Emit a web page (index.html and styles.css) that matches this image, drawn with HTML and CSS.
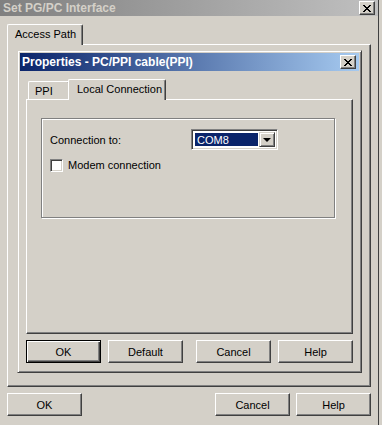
FILE: index.html
```html
<!DOCTYPE html>
<html lang="en">
<head>
    <meta charset="UTF-8">
    <meta name="viewport" content="width=device-width, initial-scale=1.0">
    <title>Set PG/PC Interface</title>
    <link rel="stylesheet" href="styles.css">
</head>
<body>

    <div class="window">
        <div class="titlebar inactive">
            <span>Set PG/PC Interface</span>
            <span class="close-btn">
                <svg width="8" height="7" viewBox="0 0 8 7"><path d="M0 0h2v1H0z M6 0h2v1H6z M1 1h2v1H1z M5 1h2v1H5z M2 2h4v1H2z M3 3h2v1H3z M2 4h4v1H2z M1 5h2v1H1z M5 5h2v1H5z M0 6h2v1H0z M6 6h2v1H6z" fill="#000"/></svg>
            </span>
        </div>

        <div class="window-body">
            <div class="tabs outer-tabs">
                <div class="tab active tab-access">Access Path</div>
            </div>

            <div class="tab-page outer-page">
                <div class="dialog">
                    <div class="titlebar active">
                        <span>Properties - PC/PPI cable(PPI)</span>
                        <span class="close-btn">
                            <svg width="8" height="7" viewBox="0 0 8 7"><path d="M0 0h2v1H0z M6 0h2v1H6z M1 1h2v1H1z M5 1h2v1H5z M2 2h4v1H2z M3 3h2v1H3z M2 4h4v1H2z M1 5h2v1H1z M5 5h2v1H5z M0 6h2v1H0z M6 6h2v1H6z" fill="#000"/></svg>
                        </span>
                    </div>

                    <div class="dialog-body">
                        <div class="tabs inner-tabs">
                            <div class="tab tab-ppi">PPI</div>
                            <div class="tab active tab-local">Local Connection</div>
                        </div>

                        <div class="tab-page inner-page">
                            <div class="group">
                                <div class="field-row">
                                    <span class="field-label">Connection to:</span>
                                    <div class="combo">
                                        <span class="combo-value">COM8</span>
                                        <span class="combo-btn"><span class="arrow"></span></span>
                                    </div>
                                </div>
                                <div class="check-row">
                                    <span class="checkbox"></span>
                                    <span>Modem connection</span>
                                </div>
                            </div>
                        </div>

                        <div class="buttons">
                            <button class="btn btn-default">OK</button>
                            <button class="btn">Default</button>
                            <button class="btn push-right">Cancel</button>
                            <button class="btn">Help</button>
                        </div>
                    </div>
                </div>
            </div>

            <div class="buttons outer-buttons">
                <button class="btn">OK</button>
                <button class="btn push-right">Cancel</button>
                <button class="btn">Help</button>
            </div>
        </div>
    </div>

</body>
</html>
```

FILE: styles.css
```css
* {
    box-sizing: border-box;
}
body {
    margin: 0;
    background-color: #d4d0c8;
    font-family: "Liberation Sans", Arial, sans-serif;
    font-size: 11px;
    line-height: 13px;
    color: #000;
}
.window {
    width: 379px;
    height: 425px;
    background: #d4d0c8;
    border-right: 1px solid #404040;
}

/* title bars */
.titlebar {
    display: flex;
    align-items: center;
    justify-content: space-between;
    height: 16px;
    padding: 0 3px 0 3px;
    font-size: 12px;
    font-weight: bold;
    white-space: nowrap;
}
.titlebar.inactive {
    background: linear-gradient(to right, #808080, #c0c0c0);
    color: #d4d0c8;
}
.titlebar.active {
    height: 18px;
    padding-left: 2px;
    background: linear-gradient(to right, #0a246a, #a6caf0);
    color: #fff;
}
.close-btn {
    display: flex;
    align-items: center;
    justify-content: center;
    width: 16px;
    height: 14px;
    background: #d4d0c8;
    border: 1px solid;
    border-color: #fff #404040 #404040 #fff;
    box-shadow: inset -1px -1px #808080;
}

.window-body {
    padding: 9px 0 0 7px;
}

/* tabs */
.tabs {
    display: flex;
    align-items: flex-end;
}
.outer-tabs {
    height: 19px;
}
.inner-tabs {
    height: 20px;
}
.tab {
    height: 18px;
    padding: 3px 6px 0 6px;
    white-space: nowrap;
    background: #d4d0c8;
    border: 1px solid;
    border-bottom: none;
    border-color: #fff #404040 #fff #fff;
    box-shadow: inset -1px 0 #808080;
    border-radius: 2px 2px 0 0;
}
.tab.active {
    position: relative;
    z-index: 1;
    height: 21px;
    margin-bottom: -1px;
}
.tab-access {
    width: 76px;
    height: 20px;
    padding-left: 7px;
}
.tab-ppi {
    width: 42px;
    margin-left: 2px;
}
.tab-local {
    width: 98px;
    margin-left: -2px;
    padding-left: 8px;
}

.tab-page {
    background: #d4d0c8;
    border: 1px solid;
    border-color: #fff #404040 #404040 #fff;
    box-shadow: inset -1px -1px #808080;
}
.outer-page {
    width: 364px;
    height: 343px;
    padding: 5px 0 0 9px;
}
.inner-page {
    height: 235px;
    padding: 18px 0 0 14px;
}

/* dialog */
.dialog {
    width: 345px;
    height: 323px;
    padding: 2px;
    border: 1px solid;
    border-color: #d4d0c8 #404040 #404040 #d4d0c8;
    box-shadow: inset 1px 1px #fff, inset -1px -1px #808080;
}
.dialog-body {
    padding: 8px 6px 0 6px;
}

/* group box */
.group {
    width: 294px;
    height: 100px;
    padding: 10px 0 0 8px;
    border: 1px solid #808080;
    box-shadow: inset 1px 1px #fff, 1px 1px #fff;
}
.field-row {
    display: flex;
    align-items: center;
}
.field-label {
    width: 141px;
    padding-top: 2px;
}
.combo {
    display: flex;
    width: 87px;
    height: 21px;
    padding: 2px;
    background: #fff;
    border: 1px solid;
    border-color: #808080 #fff #fff #808080;
    box-shadow: inset 1px 1px #404040, inset -1px -1px #d4d0c8;
}
.combo-value {
    flex: 1;
    margin: 1px;
    padding: 1px 0 0 2px;
    background: #0a246a;
    color: #fff;
}
.combo-btn {
    display: flex;
    align-items: center;
    justify-content: center;
    width: 16px;
    background: #d4d0c8;
    border: 1px solid;
    border-color: #d4d0c8 #404040 #404040 #d4d0c8;
    box-shadow: inset 1px 1px #fff, inset -1px -1px #808080;
}
.arrow {
    width: 0;
    height: 0;
    border-left: 4px solid transparent;
    border-right: 4px solid transparent;
    border-top: 4px solid #000;
    margin-top: 1px;
}
.check-row {
    display: flex;
    align-items: center;
    margin-top: 9px;
}
.checkbox {
    width: 13px;
    height: 13px;
    margin-right: 5px;
    background: #fff;
    border: 1px solid;
    border-color: #808080 #fff #fff #808080;
    box-shadow: inset 1px 1px #404040, inset -1px -1px #d4d0c8;
}

/* buttons */
.buttons {
    display: flex;
    gap: 7px;
    margin-top: 6px;
}
.outer-buttons {
    width: 364px;
    gap: 6px;
}
.push-right {
    margin-left: auto;
}
.btn {
    width: 75px;
    height: 23px;
    padding: 0;
    font-family: "Liberation Sans", Arial, sans-serif;
    font-size: 11px;
    color: #000;
    background: #d4d0c8;
    border: 1px solid;
    border-color: #fff #404040 #404040 #fff;
    box-shadow: inset -1px -1px #808080;
}
.btn-default {
    border: 1px solid #000;
    box-shadow: inset 1px 1px #fff, inset -1px -1px #404040, inset -2px -2px #808080;
}
```
